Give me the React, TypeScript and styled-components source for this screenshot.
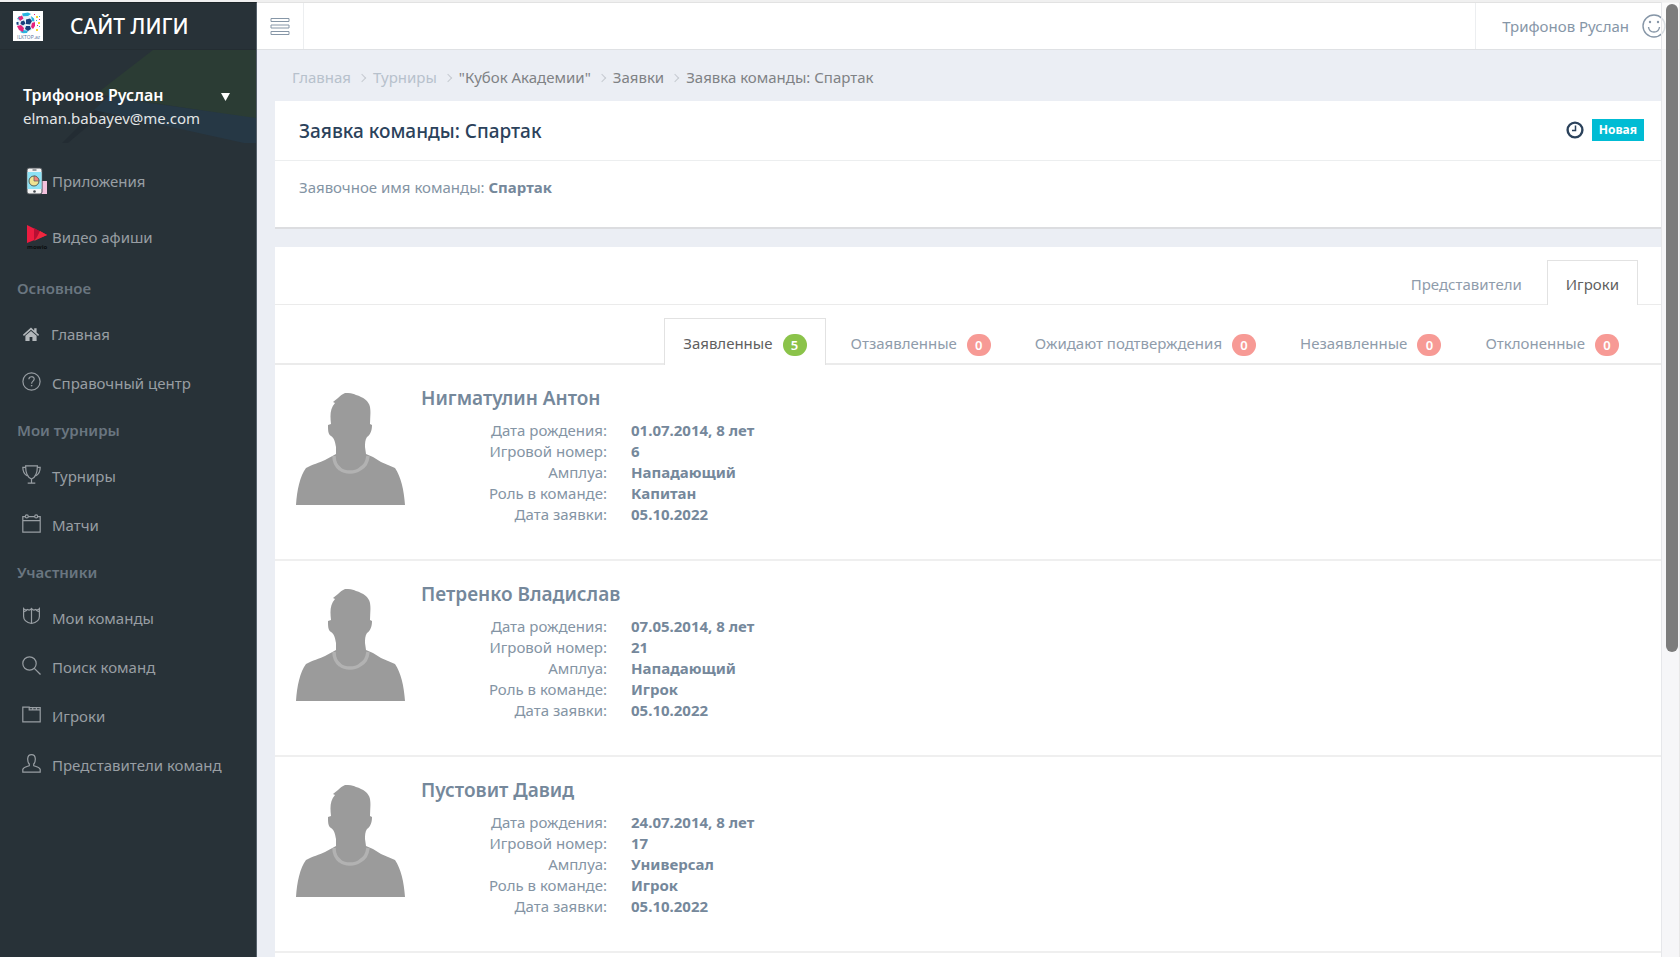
import React from 'react';
import styled, { createGlobalStyle } from 'styled-components';

const Global = createGlobalStyle`
  *, *::before, *::after { box-sizing: border-box; }
  body {
    margin: 0;
    background: #ebeef4;
    color: #75889b;
    font-family: 'Noto Sans', 'Open Sans', sans-serif;
    font-size: 15px;
    line-height: 21px;
  }
  a { color: inherit; text-decoration: none; }
  button { font: inherit; color: inherit; background: none; border: 0; padding: 0; cursor: pointer; }
  h1, h2, h3, ul, ol, dl, dd, p { margin: 0; padding: 0; }
  ul, ol { list-style: none; }
`;

const Shell = styled.div`
  display: flex;
  height: 100vh;
  overflow: hidden;
  border-top: 2px solid #f0f0f0;
`;

const Sidebar = styled.aside`
  flex: none;
  width: 257px;
  background: #283238;
  border-top: 1px solid #1e262a;
  border-right: 1px solid #56616b;
  color: #989ea3;
`;

const Brand = styled.a`
  display: flex;
  align-items: center;
  gap: 27px;
  height: 47px;
  padding-left: 13px;
  font-size: 21px;
  font-weight: 500;
  color: #fff;
  border-bottom: 1px solid #242d32;
`;

const Profile = styled.button`
  position: relative;
  display: flex;
  align-items: flex-start;
  justify-content: space-between;
  width: 100%;
  height: 94px;
  padding: 34px 26px 0 23px;
  text-align: left;
  line-height: 23px;
  color: #e3e5e6;
`;

const ProfileArt = styled.svg`
  position: absolute;
  top: 0;
  right: 0;
`;

const ProfileText = styled.span`
  position: relative;
`;

const ProfileName = styled.strong`
  display: block;
  font-size: 16px;
  font-weight: 600;
  color: #fff;
`;

const Caret = styled.svg`
  position: relative;
  margin-top: 9px;
`;

const AppLinks = styled.ul`
  padding: 9px 0 1px;
`;

const AppLink = styled.a`
  display: flex;
  align-items: center;
  gap: 4px;
  height: 56px;
  padding-left: 26px;
`;

const Group = styled.h2`
  height: 44px;
  padding-left: 17px;
  font-size: 15px;
  font-weight: 600;
  line-height: 44px;
  color: #6a7680;
`;

const MenuLink = styled.a`
  display: flex;
  align-items: center;
  gap: 11px;
  height: 49px;
  padding-left: 22px;
`;

const Page = styled.div`
  flex: 1;
  min-width: 0;
  display: flex;
  flex-direction: column;
`;

const Topbar = styled.header`
  flex: none;
  display: flex;
  justify-content: space-between;
  height: 48px;
  background: #fff;
  border-top: 1px solid #e2e2e2;
  border-bottom: 1px solid #dfe1e4;
`;

const Toggle = styled.button`
  display: flex;
  align-items: center;
  justify-content: center;
  width: 47px;
  border-right: 1px solid #eceef0;
`;

const Account = styled.button`
  display: flex;
  align-items: center;
  gap: 13px;
  padding: 0 14px 0 26px;
  border-left: 1px solid #eceef0;
  color: #8696a7;
`;

const Content = styled.main`
  flex: 1;
  display: flex;
  flex-direction: column;
  padding: 0 18px;
`;

const Crumbs = styled.ol`
  display: flex;
  align-items: center;
  height: 51px;
  padding: 4px 0 0 17px;
`;

const Crumb = styled.li<{ $muted?: boolean }>`
  display: flex;
  align-items: center;
  color: ${(p) => (p.$muted ? '#b7c1cc' : '#7f8285')};

  &:not(:first-child)::before {
    content: '';
    width: 6px;
    height: 6px;
    margin: 0 8px;
    border: solid #c6cbd1;
    border-width: 1px 1px 0 0;
    transform: rotate(45deg);
  }
`;

const Card = styled.section`
  background: #fff;
`;

const Summary = styled(Card)`
  height: 128px;
  margin-bottom: 18px;
  border-bottom: 2px solid #dcdde0;
`;

const SummaryHead = styled.header`
  display: flex;
  align-items: center;
  justify-content: space-between;
  height: 60px;
  padding: 0 18px 0 24px;
  border-bottom: 1px solid #eceeef;
`;

const Title = styled.h1`
  font-size: 19px;
  font-weight: 500;
  line-height: 26px;
  color: #2b425b;
`;

const Status = styled.div`
  display: flex;
  align-items: center;
  gap: 8px;
  padding-bottom: 1px;
`;

const Tag = styled.span`
  padding: 0 7px;
  font-size: 12px;
  font-weight: 700;
  line-height: 22px;
  color: #fff;
  background: #00bcd4;
`;

const SummaryBody = styled.p`
  padding: 16px 24px;
  color: #8494a4;

  strong { font-weight: 700; color: #75889b; }
`;

const Roster = styled(Card)`
  flex: 1;
`;

const Tabs = styled.div<{ $line: number }>`
  display: flex;
  align-items: flex-end;
  justify-content: flex-end;
  gap: 6px;
  height: ${(p) => (p.$line === 1 ? 58 : 60)}px;
  padding-right: 24px;
  border-bottom: ${(p) => p.$line}px solid #ebebeb;
`;

const Tab = styled.button<{ $line: number }>`
  display: flex;
  align-items: center;
  gap: 10px;
  height: ${(p) => (p.$line === 1 ? 45 : 47)}px;
  margin-bottom: -${(p) => p.$line}px;
  padding: ${(p) => (p.$line === 1 ? 3 : 2)}px 18px 0;
  border: 1px solid transparent;
  border-bottom: 0;
  color: #8f9cab;

  &[aria-selected='true'] {
    color: #5f5f5f;
    background: #fff;
    border-color: #e2e2e2;
  }
`;

const Count = styled.span<{ $active?: boolean }>`
  min-width: 24px;
  margin-top: 3px;
  border-radius: 11px;
  font-size: 13px;
  font-weight: 600;
  line-height: 22px;
  text-align: center;
  color: #fff;
  background: ${(p) => (p.$active ? '#8bc34a' : '#f79a95')};
`;

const Player = styled.li`
  display: flex;
  gap: 16px;
  height: 196px;
  padding: 20px 21px 0;
  border-bottom: 2px solid #efefef;
`;

const Avatar = styled.svg`
  flex: none;
  margin-top: 8px;
`;

const PlayerName = styled.h3`
  margin-bottom: 9px;
  font-size: 19px;
  font-weight: 600;
  line-height: 26px;
  color: #75889b;
`;

const Facts = styled.dl`
  display: grid;
  grid-template-columns: 186px 1fr;
  column-gap: 24px;

  dt { text-align: right; color: #8494a4; }
  dd { font-weight: 700; }
`;

const ScrollTrack = styled.div`
  position: fixed;
  top: 2px;
  right: 0;
  bottom: 0;
  width: 19px;
  padding: 2px 2px 0 4px;
  background: rgba(250, 250, 250, 0.72);
  border-left: 1px solid #e6e7ea;
  border-right: 1px solid #e8e8e8;
`;

const ScrollThumb = styled.div`
  height: 68%;
  width: 12px;
  border-radius: 6px;
  background: #7c7c7c;
`;

const LineSvg = styled.svg`
  margin-bottom: 4px;
`;

const Line = ({ children }: { children: React.ReactNode }) => (
  <LineSvg width="19" height="19" viewBox="0 0 19 19" fill="none" stroke="currentColor" strokeWidth="1.2" aria-hidden="true">
    {children}
  </LineSvg>
);

const icons: Record<string, React.ReactNode> = {
  home: (
    <svg width="18" height="17" viewBox="0 0 18 17" fill="#b3b8bb" aria-hidden="true">
      <path d="M9 1.600.9 8.800l1 1.100L9 3.700l7.100 6.200 1-1.100-2.500-2.300V2.200h-2.400v2.200z" />
      <path d="M9 4.900 3.400 9.800V15h4.200v-4h2.800v4h4.200V9.800z" />
    </svg>
  ),
  help: (
    <Line>
      <circle cx="9.5" cy="9.5" r="8.6" />
      <path d="M6.9 7.3c0-3.4 5.3-3.4 5.3-.2 0 2-2.6 2.1-2.6 4.6" />
      <path d="M9.6 13v1.3" strokeWidth="1.5" />
    </Line>
  ),
  cup: (
    <Line>
      <path d="M3.600.9h11.800c0 6.800-1.500 11.200-5.900 13.100C5.100 12.100 3.600 7.700 3.600.9z" />
      <path d="M3.700 2.300H.8c0 4.300 1.300 7.200 4.700 8.600M15.300 2.300h2.900c0 4.300-1.300 7.200-4.700 8.600M9.500 14v3.800M5.700 18.200h7.600" />
    </Line>
  ),
  calendar: (
    <Line>
      <path d="M3.400 2.700H.8v15.500h17.400V2.700h-2.600M6.200 2.700h6.600M.8 6.700h17.400" />
      <circle cx="4.800" cy="2.400" r="1.500" />
      <circle cx="14.200" cy="2.400" r="1.500" />
    </Line>
  ),
  shield: (
    <Line>
      <path d="M1.600 1.700c1.100 1.300 2.400 1.600 3.900.7 1.400 1 2.700.9 4-.8 1.300 1.700 2.600 1.800 4 .8 1.500.9 2.800.6 3.900-.7v7.900c0 3.700-3.400 6.100-7.900 6.900-4.500-.8-7.900-3.200-7.900-6.900z" />
      <path d="M9.500 1.600v14.700M2 4.600l3-1.400M17 4.600l-3-1.400" />
    </Line>
  ),
  search: (
    <Line>
      <circle cx="7.500" cy="7.500" r="6.700" />
      <path d="m12.300 12.300 6.200 6.200" />
    </Line>
  ),
  folder: (
    <Line>
      <path d="M.8 2.200h6.400v2.600h11v12H.8zM7.200 2.700h11v2.500M10.700 2.700v2M14.400 2.700v2" />
    </Line>
  ),
  person: (
    <Line>
      <path d="M7.300 11.700V10C5.600 8.500 5.600 6.700 5.700 4.600 5.900 2 7.300.7 9.500.7s3.600 1.300 3.800 3.900c.1 2.100.1 3.900-1.600 5.400v1.700c2.900 1.100 5.800 1.700 6.500 3.600v2.900H.8v-2.900c.7-1.900 3.600-2.500 6.500-3.600z" />
    </Line>
  ),
};

const menu = [
  { title: 'Основное', items: [['home', 'Главная'], ['help', 'Справочный центр']] },
  { title: 'Мои турниры', items: [['cup', 'Турниры'], ['calendar', 'Матчи']] },
  {
    title: 'Участники',
    items: [['shield', 'Мои команды'], ['search', 'Поиск команд'], ['folder', 'Игроки'], ['person', 'Представители команд']],
  },
];

const crumbs = ['Главная', 'Турниры', '"Кубок Академии"', 'Заявки', 'Заявка команды: Спартак'];

const statusTabs: [string, number][] = [
  ['Заявленные', 5],
  ['Отзаявленные', 0],
  ['Ожидают подтверждения', 0],
  ['Незаявленные', 0],
  ['Отклоненные', 0],
];

const players = [
  { name: 'Нигматулин Антон', born: '01.07.2014, 8 лет', number: '6', position: 'Нападающий', role: 'Капитан', applied: '05.10.2022' },
  { name: 'Петренко Владислав', born: '07.05.2014, 8 лет', number: '21', position: 'Нападающий', role: 'Игрок', applied: '05.10.2022' },
  { name: 'Пустовит Давид', born: '24.07.2014, 8 лет', number: '17', position: 'Универсал', role: 'Игрок', applied: '05.10.2022' },
];

const Logo = () => (
  <svg width="30" height="30" viewBox="0 0 30 30" aria-hidden="true">
    <path fill="#fff" d="M0 0h30v30H0z" />
    <circle cx="12.500" cy="12.500" r="9" fill="#e6f2fa" />
    <path fill="#28b4e0" d="m9 2.500 6-1 3 1.500-3 2-5 .3zM4 8l2-3 2.500 1L7 9zM7 21l3-2 5 .8-1 2.200-4 .3zM18 5l3 2.500.5 3-2.500-.5z" />
    <path fill="#e5237b" d="m5 6.500 4-2 1.500 3L7 10zM4 15l4-1 3 3-1 4-4-2zM19 12l3-1v4l-2 3-2-2z" />
    <path fill="#18407c" d="m13 8.500 4-1 2 2.500-2 3.500-4-.5zM8 10.500l3-1 1.500 3-2.500 2-2.500-1.500zM13 15l4 0 1 3-3 2-3-2zM3.500 11l2 0 0 3-2-.5z" />
    <path fill="#f4d531" d="M23 5h2v2h-2zM25 11h2v2h-2zM23 18h2v2h-2z" />
    <path fill="#e5237b" d="M21 3h1v1h-1zM26 8h1v1h-1zM24 14h1v1h-1z" />
    <path fill="#28b4e0" d="M26 5h1v1h-1zM23 9h1v1h-1zM26 15h1v1h-1z" />
    <text x="4" y="28" fontSize="5" fontFamily="Open Sans, sans-serif" fill="#56739c">ILKTOP.az</text>
  </svg>
);

const PhoneIcon = () => (
  <svg width="22" height="28" viewBox="0 0 22 28" aria-hidden="true">
    <path d="M14 14h7v13h-7z" fill="#f3c1dd" />
    <rect x="1" y="1" width="15" height="26" rx="2" fill="#f4f4f4" stroke="#454b50" />
    <path d="M1.500 5h14v17h-14z" fill="#8de2f5" />
    <path d="M6.500 3h4" stroke="#454b50" />
    <circle cx="8" cy="14" r="5" fill="#f0e391" stroke="#55605c" />
    <path d="M8 14V9a5 5 0 0 1 5 5z" fill="#f1867f" stroke="#55605c" strokeWidth=".7" />
    <circle cx="8.500" cy="24.500" r="1.300" fill="#454b50" />
  </svg>
);

const VideoIcon = () => (
  <svg width="22" height="26" viewBox="0 0 22 26" aria-hidden="true">
    <path d="M1 1v18l20-8z" fill="#ed1c40" />
    <path d="m8 4 13 7-13 5z" fill="#b80f33" />
    <path d="m14 7 7 4-13 6 3-4z" fill="#f0283f" />
    <text x="1" y="25" fontSize="6" fontWeight="700" fontFamily="Open Sans, sans-serif" fill="#0b0e10">mowio</text>
  </svg>
);

const PlayerAvatar = () => (
  <Avatar width="109" height="112" viewBox="0 0 109 112" role="img" aria-label="Фото игрока">
    <path
      fill="#9b9b9b"
      d="M52 0c4 0 6 1 8 2 7 2 13 6 14 12 1 6 0 11 0 17l2 1c0 6-2 10-5 12-2 3-2 6-2 10l1 7 7 3 8 5 14 6c6 9 9 22 10 37H0c1-15 4-29 10-37 7-4 13-5 19-8l11-6V54c-1-6-2-9-5-11-3-2-3-6-3-11l3-1c-1-9-1-15 4-21l-2-1 5-4c3-3 6-5 10-6z"
    />
    <path d="M38 63c0 7 2 10 6 13 5 4 15 4 20 0 5-3 7-6 8-13" fill="none" stroke="#b2b2b2" strokeWidth="3.500" />
  </Avatar>
);

export default function App() {
  return (
    <>
      <Global />
      <Shell>
        <Sidebar>
          <Brand href="#">
            <Logo />
            САЙТ ЛИГИ
          </Brand>
          <Profile>
            <ProfileArt width="256" height="94" viewBox="0 0 256 94" aria-hidden="true">
              <path d="M96 59 62 93h6l40-34z" fill="#232c33" />
              <path d="M153 0h103v69L96 44z" fill="#2b3c34" />
              <path d="M108 47 256 68v25h-12L94 60z" fill="#263845" />
            </ProfileArt>
            <ProfileText>
              <ProfileName>Трифонов Руслан</ProfileName>
              elman.babayev@me.com
            </ProfileText>
            <Caret width="9" height="8" viewBox="0 0 9 8" aria-hidden="true">
              <path d="M0 0h9L4.500 8z" fill="#fff" />
            </Caret>
          </Profile>
          <nav>
            <AppLinks>
              <li><AppLink href="#"><PhoneIcon />Приложения</AppLink></li>
              <li><AppLink href="#"><VideoIcon />Видео афиши</AppLink></li>
            </AppLinks>
            {menu.map((group) => (
              <React.Fragment key={group.title}>
                <Group>{group.title}</Group>
                <ul>
                  {group.items.map(([icon, label]) => (
                    <li key={label}><MenuLink href="#">{icons[icon]}{label}</MenuLink></li>
                  ))}
                </ul>
              </React.Fragment>
            ))}
          </nav>
        </Sidebar>
        <Page>
          <Topbar>
            <Toggle aria-label="Меню">
              <svg width="20" height="19" viewBox="0 0 20 19" fill="none" stroke="#8696a7" aria-hidden="true">
                <path d="M1 1.500h18v3H1zM1 8h18v3H1zM1 14.500h18v3H1z" />
              </svg>
            </Toggle>
            <Account>
              Трифонов Руслан
              <svg width="24" height="24" viewBox="0 0 24 24" fill="none" stroke="#8696a7" strokeWidth="1.400" aria-hidden="true">
                <circle cx="12" cy="12" r="11" />
                <path d="M6.500 13c.8 6.700 10.200 6.700 11 0" />
                <circle cx="8" cy="8" r="1.200" fill="#8696a7" stroke="none" />
                <circle cx="16" cy="8" r="1.200" fill="#8696a7" stroke="none" />
              </svg>
            </Account>
          </Topbar>
          <Content>
            <nav>
              <Crumbs>
                {crumbs.map((label, i) => (
                  <Crumb key={label} $muted={i < 2}><a href="#">{label}</a></Crumb>
                ))}
              </Crumbs>
            </nav>
            <Summary>
              <SummaryHead>
                <Title>Заявка команды: Спартак</Title>
                <Status>
                  <svg width="18" height="18" viewBox="0 0 18 18" fill="none" stroke="#2b425b" aria-hidden="true">
                    <circle cx="9" cy="9" r="7.400" strokeWidth="2.400" />
                    <path d="M9.500 4.500v5H6" strokeWidth="1.500" />
                  </svg>
                  <Tag>Новая</Tag>
                </Status>
              </SummaryHead>
              <SummaryBody>Заявочное имя команды: <strong>Спартак</strong></SummaryBody>
            </Summary>
            <Roster>
              <Tabs role="tablist" $line={1}>
                <Tab role="tab" aria-selected={false} $line={1}>Представители</Tab>
                <Tab role="tab" aria-selected $line={1}>Игроки</Tab>
              </Tabs>
              <Tabs role="tablist" $line={2}>
                {statusTabs.map(([label, count], i) => (
                  <Tab key={label} role="tab" aria-selected={i === 0} $line={2}>
                    {label}
                    <Count $active={i === 0}>{count}</Count>
                  </Tab>
                ))}
              </Tabs>
              <ul>
                {players.map((p) => (
                  <Player key={p.name}>
                    <PlayerAvatar />
                    <div>
                      <PlayerName>{p.name}</PlayerName>
                      <Facts>
                        <dt>Дата рождения:</dt><dd>{p.born}</dd>
                        <dt>Игровой номер:</dt><dd>{p.number}</dd>
                        <dt>Амплуа:</dt><dd>{p.position}</dd>
                        <dt>Роль в команде:</dt><dd>{p.role}</dd>
                        <dt>Дата заявки:</dt><dd>{p.applied}</dd>
                      </Facts>
                    </div>
                  </Player>
                ))}
              </ul>
            </Roster>
          </Content>
        </Page>
      </Shell>
      <ScrollTrack aria-hidden="true"><ScrollThumb /></ScrollTrack>
    </>
  );
}
